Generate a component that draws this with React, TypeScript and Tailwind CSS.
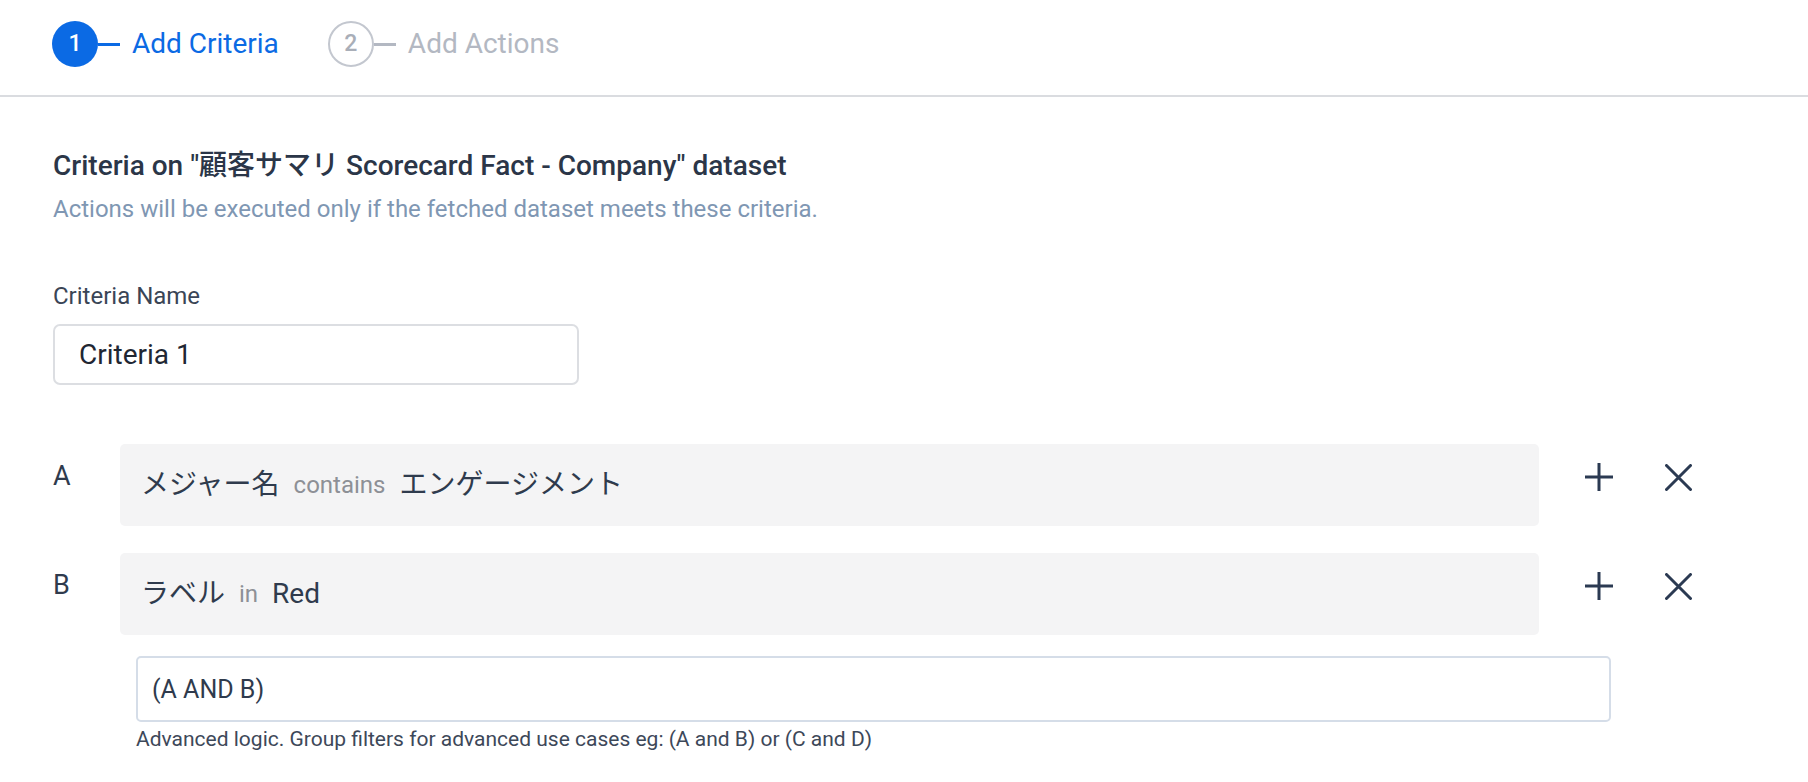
const font = { fontFamily: 'Roboto, "Noto Sans CJK JP", sans-serif' };

const StepDot = ({ n, active }: { n: number; active: boolean }) => (
    <div
        className={
            active
                ? 'w-[46px] h-[46px] rounded-full bg-[#0b6ae4] text-white flex items-center justify-center text-[23px] font-medium'
                : 'w-[46px] h-[46px] rounded-full border-2 border-[#c3c7cf] text-[#a9aeb8] flex items-center justify-center text-[23px] font-medium'
        }
    >
        {n}
    </div>
);

const PlusIcon = () => (
    <svg width="28" height="28" viewBox="0 0 28 28" fill="none" stroke="currentColor" strokeWidth="3">
        <path d="M14 0v28M0 14h28" />
    </svg>
);

const CloseIcon = () => (
    <svg width="27" height="27" viewBox="0 0 27 27" fill="none" stroke="currentColor" strokeWidth="3" strokeLinecap="round">
        <path d="M1.5 1.5l24 24M25.5 1.5l-24 24" />
    </svg>
);

const FilterRow = ({ letter, field, op, value }: { letter: string; field: string; op: string; value: string }) => (
    <div className="flex items-start">
        <div className="w-[67px] pt-[16px] text-[27px] leading-[32px] text-[#2f3b4d]">{letter}</div>
        <div className="w-[1419px] h-[82px] bg-[#f4f4f5] rounded-[5px] flex items-center px-[21px] gap-[14px] text-[#2f3b4d]">
            <span className="text-[28px]">{field}</span>
            <span className="text-[24px] text-[#8d9096]">{op}</span>
            <span className="text-[28px]">{value}</span>
        </div>
        <div className="flex items-center gap-[52px] ml-[46px] pt-[19px] text-[#2b3a52]">
            <PlusIcon />
            <CloseIcon />
        </div>
    </div>
);

export default function App() {
    return (
        <div className="min-h-screen w-full bg-white" style={font}>
            <div className="h-[97px] flex items-start pt-[21px] px-[52px] border-b-2 border-[#dadce0]">
                <div className="flex items-center">
                    <StepDot n={1} active />
                    <div className="w-[22px] h-[3px] bg-[#0b6ae4]" />
                    <span className="ml-[12px] text-[28px] text-[#0b6ae4]">Add Criteria</span>
                </div>
                <div className="flex items-center ml-[49px]">
                    <StepDot n={2} active={false} />
                    <div className="w-[22px] h-[3px] bg-[#b3b8c2]" />
                    <span className="ml-[12px] text-[28px] text-[#b3b8c2]">Add Actions</span>
                </div>
            </div>

            <div className="px-[53px] pt-[52px]">
                <h2 className="text-[28px] font-medium text-[#2b3648] leading-[34px]">
                    Criteria on "顧客サマリ Scorecard Fact - Company" dataset
                </h2>
                <p className="mt-[11px] text-[24px] text-[#7f97b3] leading-[30px]">
                    Actions will be executed only if the fetched dataset meets these criteria.
                </p>

                <label className="block mt-[57px] text-[24px] text-[#3a4556] leading-[30px]">Criteria Name</label>
                <input
                    readOnly
                    value="Criteria 1"
                    className="mt-[13px] w-[526px] h-[61px] border-2 border-[#dcdee2] rounded-[7px] px-[24px] text-[28px] text-[#1f2733] outline-none"
                />

                <div className="mt-[59px] flex flex-col gap-[27px]">
                    <FilterRow letter="A" field="メジャー名" op="contains" value="エンゲージメント" />
                    <FilterRow letter="B" field="ラベル" op="in" value="Red" />
                </div>

                <div className="ml-[83px] mt-[21px]">
                    <input
                        readOnly
                        value="(A AND B)"
                        className="w-[1475px] h-[66px] border-2 border-[#d5dde8] rounded-[5px] px-[14px] text-[25px] text-[#2f3b4d] outline-none"
                    />
                    <p className="mt-[4px] text-[21px] leading-[26px] text-[#3d4859]">
                        Advanced logic. Group filters for advanced use cases eg: (A and B) or (C and D)
                    </p>
                </div>
            </div>
        </div>
    );
}
